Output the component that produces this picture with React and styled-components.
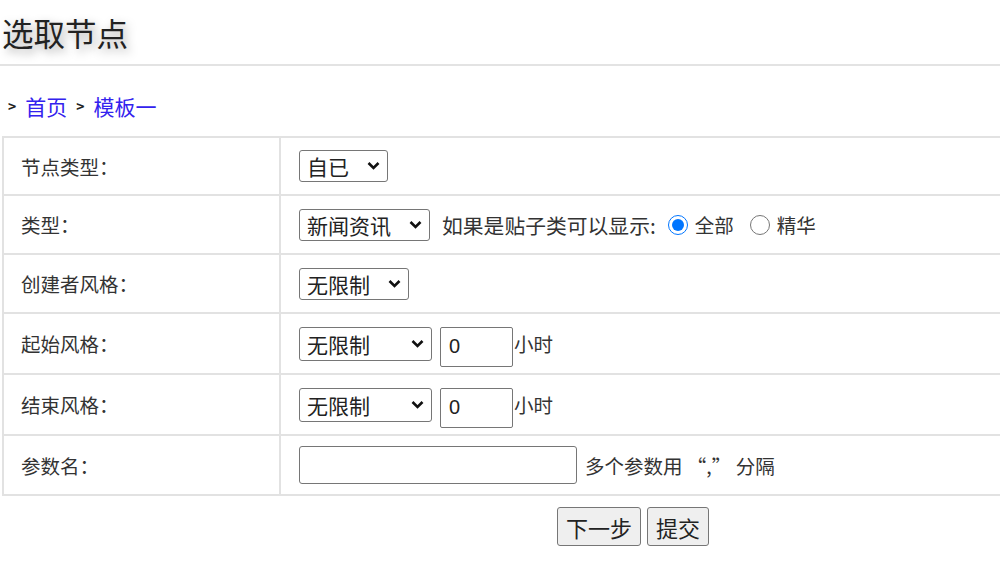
import React from 'react';
import styled, { createGlobalStyle } from 'styled-components';

const GlobalStyle = createGlobalStyle`
  html, body {
    margin: 0;
    padding: 0;
    overflow: hidden;
    background: #fff;
  }
  body {
    font-family: "Noto Sans CJK SC", "Noto Sans", sans-serif;
    color: #333;
  }
`;

const Page = styled.div`
  width: 1262px;
  padding: 0 0 0 2px;
`;

const Title = styled.h1`
  margin: 0 0 0 -2px;
  height: 64px;
  display: flex;
  align-items: center;
  padding-left: 2px;
  font-size: 31.5px;
  font-weight: normal;
  color: #222;
  text-shadow: 3px 4px 10px rgba(0, 0, 0, 0.35);
  border-bottom: 2px solid #e3e3e3;
`;

const Crumbs = styled.div`
  display: flex;
  align-items: center;
  gap: 9px;
  height: 36px;
  margin: 22px 0 12px 6px;
  font-size: 21px;
`;

const Sep = styled.span`
  font-size: 14px;
  font-weight: bold;
  color: #222;
`;

const Crumb = styled.a`
  color: #3322ee;
  text-decoration: none;
`;

const Table = styled.table`
  width: 1260px;
  border-collapse: collapse;
  font-size: 19.5px;
  color: #333;
`;

const Row = styled.tr`
  height: ${p => p.h || 59}px;
`;

const Label = styled.td`
  width: 258px;
  padding: 0 0 0 17px;
  border: 2px solid #e2e2e2;
`;

const Field = styled.td`
  padding: 0 0 0 18px;
  border: 2px solid #e2e2e2;
`;

const Line = styled.div`
  display: flex;
  align-items: center;
  gap: ${p => p.gap || 8}px;
`;

const SelectWrap = styled.span`
  position: relative;
  display: inline-flex;
  svg {
    position: absolute;
    right: 8px;
    top: 50%;
    transform: translateY(-50%);
    pointer-events: none;
  }
`;

const Select = styled.select`
  appearance: none;
  font-family: "Noto Sans CJK SC", sans-serif;
  font-size: 21px;
  color: #222;
  height: ${p => p.h || 32}px;
  width: ${p => (p.w ? `${p.w}px` : 'auto')};
  padding: 0 38px 0 7px;
  border: 1px solid #767676;
  border-radius: 3px;
  background: #fff;
`;

const Chevron = () => (
  <svg width="13" height="9" viewBox="0 0 13 9">
    <path d="M1.5 1.5 L6.5 6.5 L11.5 1.5" fill="none" stroke="#111" strokeWidth="2.6" />
  </svg>
);

const Dropdown = ({ w, h, value }) => (
  <SelectWrap>
    <Select w={w} h={h} defaultValue={value}>
      <option value={value}>{value}</option>
    </Select>
    <Chevron />
  </SelectWrap>
);

const NumInput = styled.input`
  width: 73px;
  height: 40px;
  box-sizing: border-box;
  margin-top: 6px;
  padding: 0 8px;
  font-family: "Liberation Sans", sans-serif;
  font-size: 20px;
  color: #222;
  border: 1px solid #767676;
  border-radius: 2px;
`;

const TextInput = styled.input`
  width: 278px;
  height: 38px;
  box-sizing: border-box;
  border: 1px solid #767676;
  border-radius: 3px;
  font-size: 18px;
`;

const Unit = styled.span`
  margin-left: -7px;
  font-size: 19.5px;
`;

const Hint = styled.span`
  font-size: ${p => p.size || 19.5}px;
`;

const Radio = styled.label`
  display: flex;
  align-items: center;
  gap: 7px;
  margin-left: ${p => p.ml || 0}px;
  font-size: 19.5px;
  input {
    width: 20px;
    height: 20px;
    margin: 0;
  }
`;

const Actions = styled.div`
  display: flex;
  justify-content: center;
  gap: 6px;
  margin-top: 11px;
`;

const Button = styled.button`
  height: 39px;
  padding: 0 8px;
  font-family: "Noto Sans CJK SC", sans-serif;
  font-size: 22px;
  color: #222;
  background: #efefef;
  border: 1px solid #767676;
  border-radius: 3px;
`;

export default function App() {
  return (
    <Page>
      <GlobalStyle />
      <Title>选取节点</Title>
      <Crumbs>
        <Sep>&gt;</Sep>
        <Crumb href="#">首页</Crumb>
        <Sep>&gt;</Sep>
        <Crumb href="#">模板一</Crumb>
      </Crumbs>
      <Table>
        <tbody>
          <Row h={58}>
            <Label>节点类型：</Label>
            <Field>
              <Dropdown value="自已" />
            </Field>
          </Row>
          <Row>
            <Label>类型：</Label>
            <Field>
              <Line gap={12}>
                <Dropdown value="新闻资讯" />
                <Hint size={20.8}>如果是贴子类可以显示:</Hint>
                <Radio>
                  <input type="radio" name="show" defaultChecked />
                  全部
                </Radio>
                <Radio ml={4}>
                  <input type="radio" name="show" />
                  精华
                </Radio>
              </Line>
            </Field>
          </Row>
          <Row>
            <Label>创建者风格：</Label>
            <Field>
              <Dropdown value="无限制" />
            </Field>
          </Row>
          <Row h={61}>
            <Label>起始风格：</Label>
            <Field>
              <Line>
                <Dropdown w={133} h={34} value="无限制" />
                <NumInput defaultValue="0" />
                <Unit>小时</Unit>
              </Line>
            </Field>
          </Row>
          <Row h={61}>
            <Label>结束风格：</Label>
            <Field>
              <Line>
                <Dropdown w={133} h={34} value="无限制" />
                <NumInput defaultValue="0" />
                <Unit>小时</Unit>
              </Line>
            </Field>
          </Row>
          <Row h={60}>
            <Label>参数名：</Label>
            <Field>
              <Line>
                <TextInput />
                <Hint>多个参数用 “,” 分隔</Hint>
              </Line>
            </Field>
          </Row>
        </tbody>
      </Table>
      <Actions>
        <Button>下一步</Button>
        <Button>提交</Button>
      </Actions>
    </Page>
  );
}
